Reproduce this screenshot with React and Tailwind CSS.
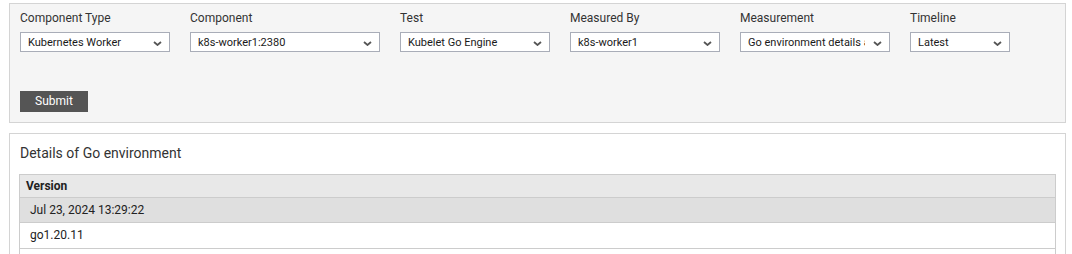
import React from 'react';

const fields = [
  { label: 'Component Type', value: 'Kubernetes Worker', w: 'w-[150px]' },
  { label: 'Component', value: 'k8s-worker1:2380', w: 'w-[190px]' },
  { label: 'Test', value: 'Kubelet Go Engine', w: 'w-[150px]' },
  { label: 'Measured By', value: 'k8s-worker1', w: 'w-[150px]' },
  { label: 'Measurement', value: 'Go environment details and version', w: 'w-[150px]' },
  { label: 'Timeline', value: 'Latest', w: 'w-[100px]' },
];

function Chevron() {
  return (
    <svg className="absolute right-[7px] top-[8px]" width="9" height="5" viewBox="0 0 9 5" fill="none">
      <path d="M1 1l3.5 3L8 1" stroke="#555" strokeWidth="1.8" />
    </svg>
  );
}

function Select({ value, w }) {
  return (
    <div className={`relative h-[20px] ${w} border border-[#a9adb8] bg-white pl-[7px]`}>
      <div className="mr-[24px] overflow-hidden whitespace-nowrap text-[11px] leading-[19px] text-[#1a1a1a]">
        {value}
      </div>
      <Chevron />
    </div>
  );
}

export default function App() {
  return (
    <div className="min-h-screen bg-white font-['Roboto',sans-serif] text-[#333]">
      {/* filtros */}
      <div className="ml-[9px] mt-[3px] w-[1057px] border border-[#d4d4d4] bg-[#f5f5f5] px-[10px] pb-[10px] pt-[6px]">
        <div className="flex gap-[20px]">
          {fields.map((f) => (
            <div key={f.label} className="flex flex-col">
              <label className="mb-[5px] text-[12px] leading-[17px] text-[#333]">{f.label}</label>
              <Select value={f.value} w={f.w} />
            </div>
          ))}
        </div>
        <button className="mt-[39px] h-[21px] w-[68px] bg-[#555555] text-[12px] leading-[21px] text-white">
          Submit
        </button>
      </div>

      {/* resultado */}
      <div className="ml-[9px] mt-[10px] w-[1057px] border border-[#d4d4d4] bg-white px-[9px] pt-[9px]">
        <h2 className="mb-[11px] pl-[1px] text-[14px] leading-[20px] text-[#333]">Details of Go environment</h2>
        <div className="border border-[#cccccc]">
          <div className="h-[23px] border-b border-[#cccccc] bg-[#e8e8e8] pl-[6px] text-[12px] font-bold leading-[22px] text-[#222]">
            Version
          </div>
          <div className="h-[25px] border-b border-[#cccccc] bg-[#dfdfdf] pl-[10px] text-[12px] leading-[24px] text-[#222]">
            Jul 23, 2024 13:29:22
          </div>
          <div className="h-[26px] border-b border-[#cccccc] bg-white pl-[10px] text-[12px] leading-[25px] text-[#222]">
            go1.20.11
          </div>
          <div className="h-[26px] bg-white"></div>
        </div>
      </div>
    </div>
  );
}
